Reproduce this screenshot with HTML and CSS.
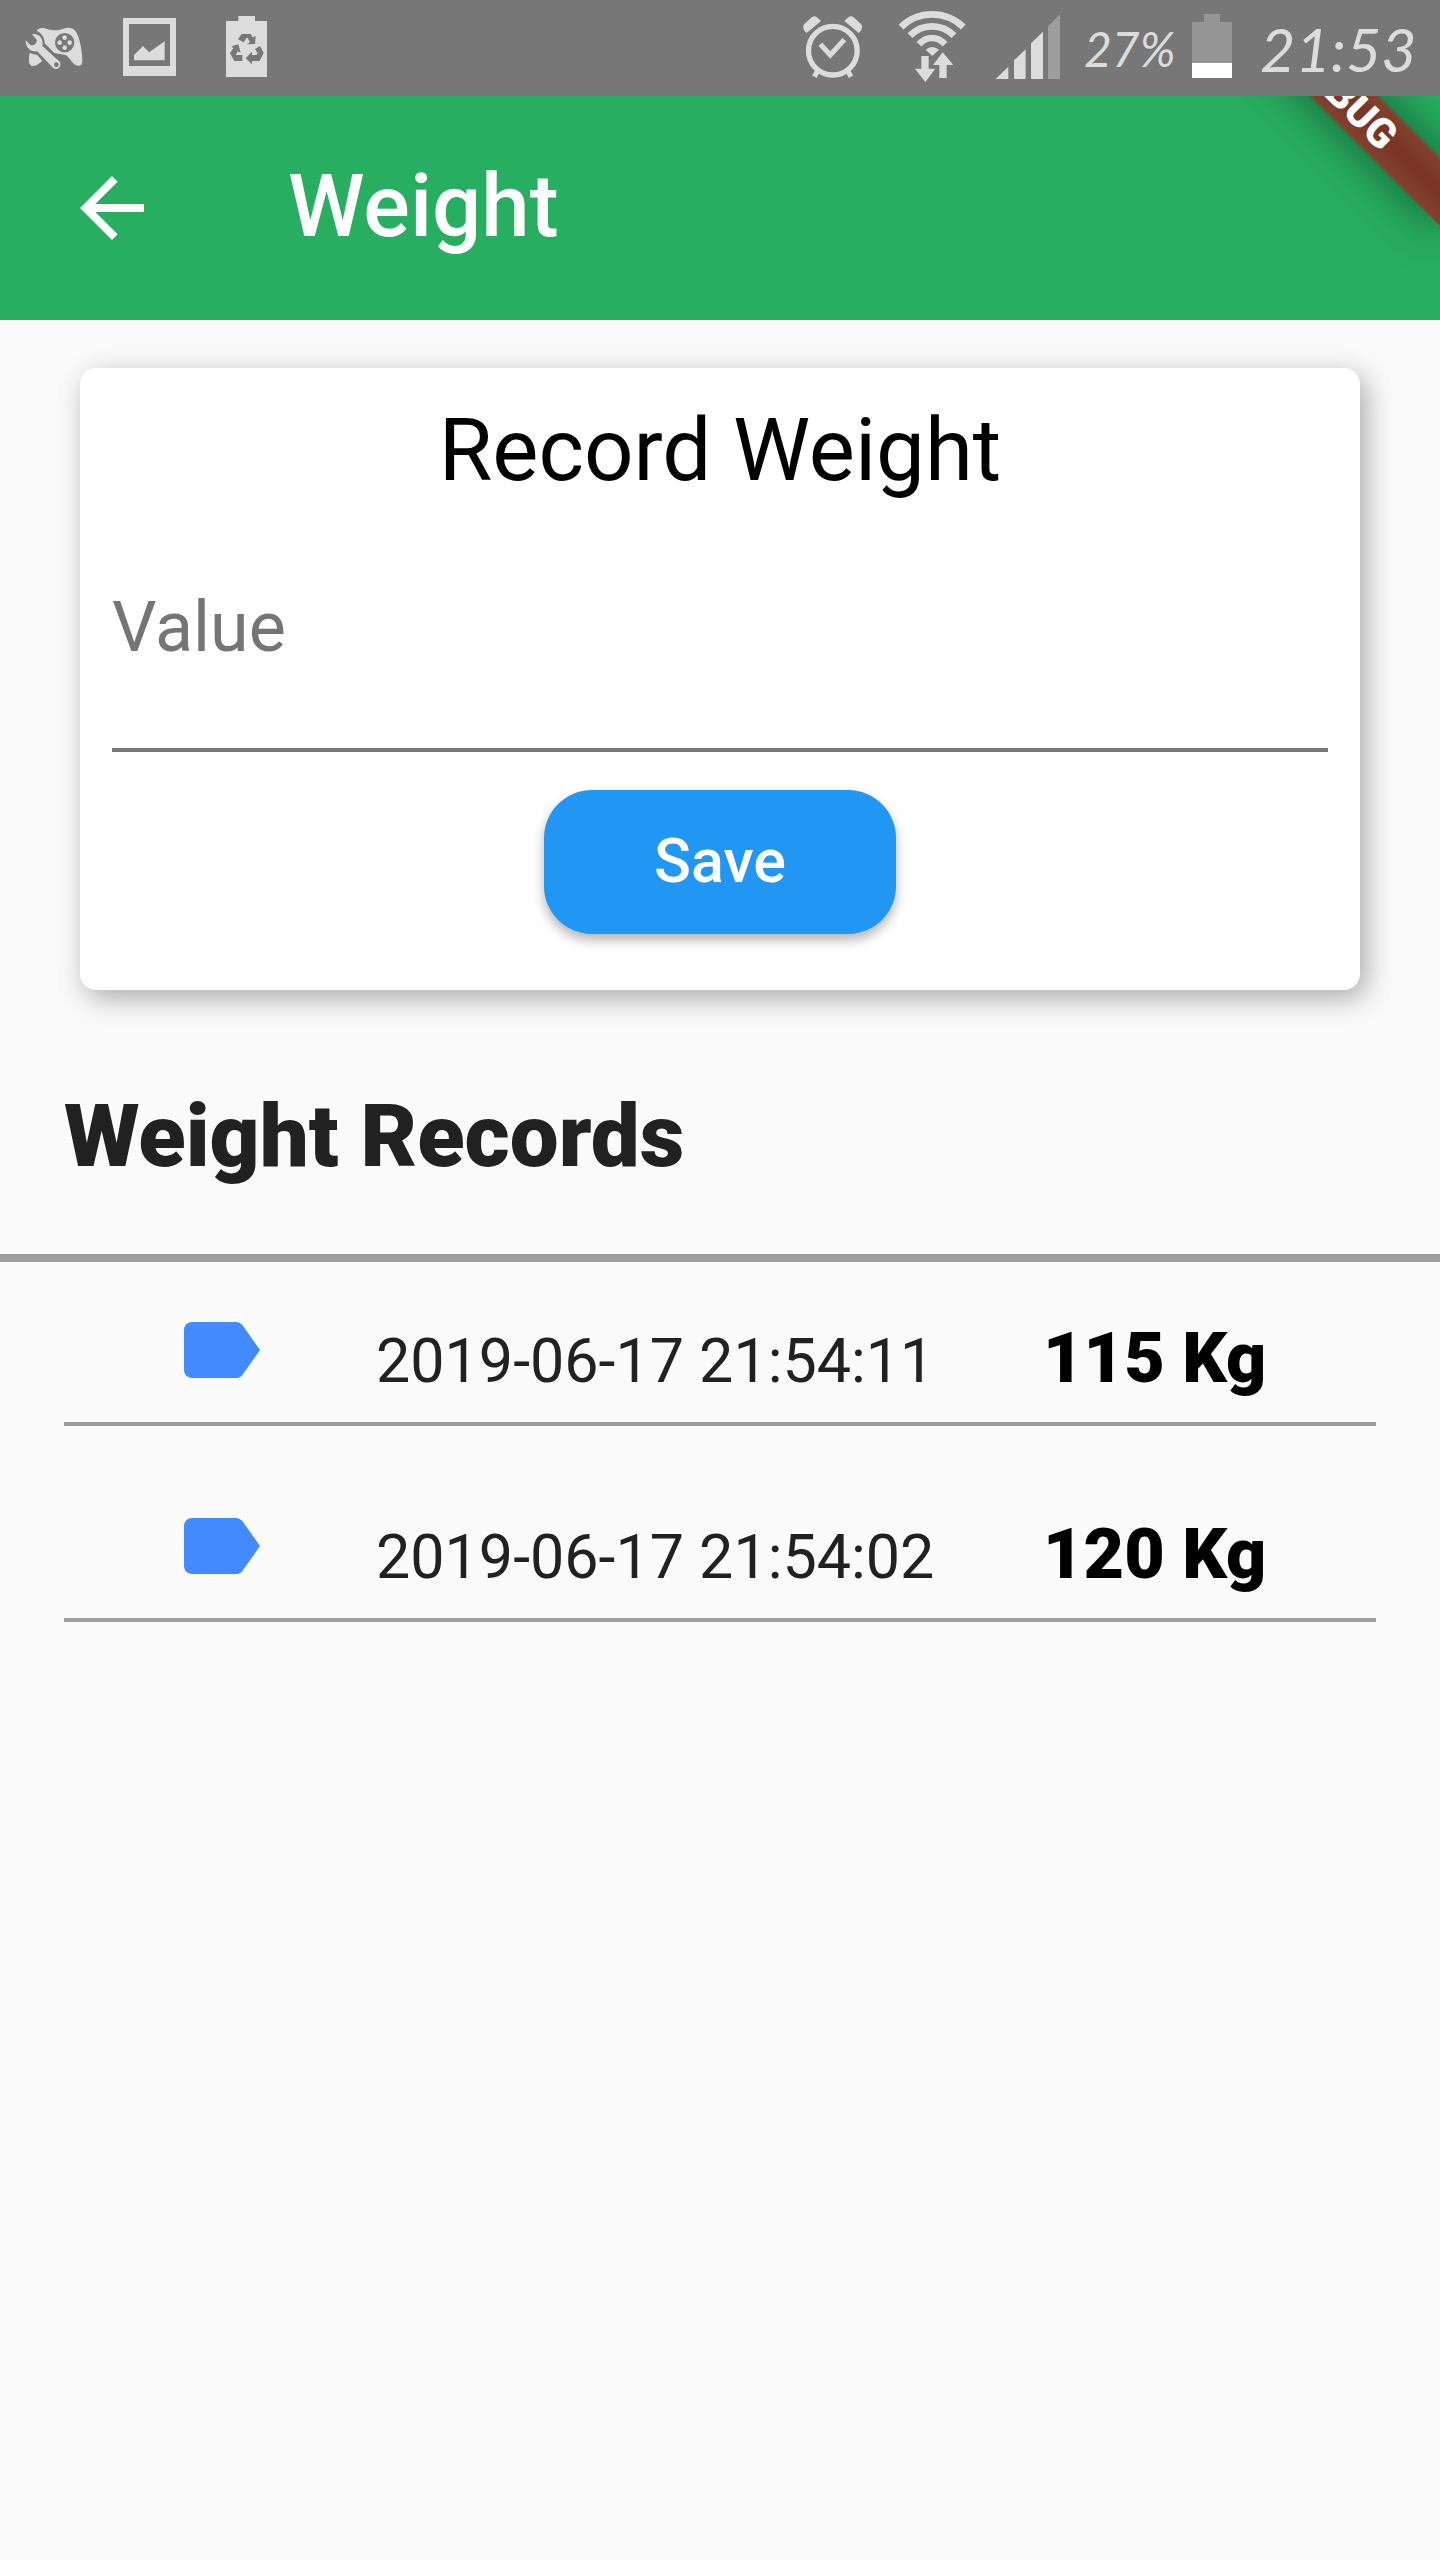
FILE: index.html
```html
<!DOCTYPE html>
<html lang="en">
<head>
<meta charset="utf-8">
<meta name="viewport" content="width=device-width, initial-scale=1">
<title>Weight</title>
<link rel="stylesheet" href="styles.css">
</head>
<body>
<div class="status">
  <div class="status-group">
    <svg class="status-icon" viewBox="0 0 300 288" aria-hidden="true">
      <path fill="#dcdcdc" d="M110 92C116 84 124 82 134 85C150 92 172 93 190 86C208 80 222 84 230 98C240 120 246 150 247 182C247 196 238 200 228 196C216 190 208 172 198 166C186 161 172 162 162 158L134 130C135 114 124 98 110 92Z"/>
      <path fill="#dcdcdc" d="M89 158C98 163 106 162 112 165L127 183C118 189 112 198 98 198C84 197 86 174 89 158Z"/>
      <circle cx="194" cy="128" r="29" fill="#777"/>
      <g fill="#dcdcdc"><circle cx="194" cy="113" r="7"/><circle cx="194" cy="143" r="7"/><circle cx="179" cy="128" r="7"/><circle cx="209" cy="128" r="7"/></g>
      <path fill="#dcdcdc" fill-rule="evenodd" d="M96 103C112 99 128 111 128 130L127 138L179 185C187 200 171 213 159 203L112 154C94 158 76 143 77 121L91 135C100 139 112 130 110 119ZM169 187A7 7 0 1 0 169 201A7 7 0 1 0 169 187Z"/>
    </svg>
    <svg class="status-icon" viewBox="300 0 300 288" aria-hidden="true">
      <path fill="#dcdcdc" fill-rule="evenodd" d="M369 54H528V228H369ZM387 72V198H510V72ZM402 181V165L429 138L447 157L494 124V181Z"/>
    </svg>
    <svg class="status-icon" viewBox="600 0 300 288" aria-hidden="true">
      <path fill="#dcdcdc" d="M678 63H715V48H765V63H801V231H678Z"/>
      <g fill="#777"><path d="M725 102H752L758 112L767 108L765 132L741 133L750 126L741 112L731 127L714 118Z"/><path d="M765 147L780 138L791 158L779 183H756V193L737 175L756 155V165H769L773 160Z"/><path d="M694 139L715 133L722 158L713 154L707 165H727V183H703L690 160L700 144Z"/></g>
    </svg>
  </div>
  <div class="status-group">
    <svg class="status-icon" viewBox="0 0 300 288" aria-hidden="true">
      <g fill="none" stroke="#dcdcdc"><circle cx="158.500" cy="152" r="73" stroke-width="16"/><path stroke-width="15" d="M121 133L151 165L193 119M113 212L103 230M203 212L213 230"/></g>
      <path fill="#dcdcdc" d="M80 99C70 92 67 80 73 72L96 51C103 46 111 49 123 63ZM236 99C246 92 249 80 243 72L220 51C213 46 205 49 193 63Z"/>
    </svg>
    <svg class="status-icon" viewBox="300 0 300 288" aria-hidden="true">
      <g fill="none" stroke="#dcdcdc" stroke-width="20"><path d="M363 81Q402 43 456 43T550 81"/><path d="M390 107Q417 79 456 79T522 107"/><path d="M417 133Q434 114 456 114T495 133"/></g>
      <path fill="#dcdcdc" d="M437 149Q456 133 477 149L457 168ZM424 168H446V206H466L436 246L405 206H424ZM488 157L520 195H500V234H478V195H459Z"/>
    </svg>
    <svg class="status-icon" viewBox="600 0 300 288" aria-hidden="true">
      <path fill="#dcdcdc" d="M647 237L685 200V237ZM702 237V181L737 148V237ZM753 237V130L789 95V237Z"/><path fill="#9e9e9e" d="M804 237V79L840 43V237Z"/>
    </svg>
    <span class="percent">27%</span>
    <svg class="battery" viewBox="0 0 40 64" aria-hidden="true"><path fill="#959595" d="M12 0H28V8H40V49H0V8H12Z"/><path fill="#fff" d="M0 49H40V64H0Z"/></svg>
    <time class="clock">21:53</time>
  </div>
</div>

<header class="appbar">
  <button class="back" type="button" aria-label="Back">
    <svg viewBox="0 0 24 24" aria-hidden="true"><path fill="#fff" d="M20 11H7.830l5.590-5.590L12 4l-8 8 8 8 1.410-1.410L7.830 13H20z"/></svg>
  </button>
  <h1 class="title">Weight</h1>
  <span class="debug">DEBUG</span>
</header>

<main>
  <form class="card">
    <h2 class="card-title">Record Weight</h2>
    <div class="field">
      <label for="value">Value</label>
      <input id="value" type="text" inputmode="decimal">
    </div>
    <button class="save" type="button">Save</button>
  </form>

  <h2 class="records-title">Weight Records</h2>
  <ul class="records">
    <li class="record">
      <svg class="tag" viewBox="0 0 24 24" aria-hidden="true"><path fill="#448aff" d="M17.630 5.840C17.270 5.330 16.670 5 16 5L5 5.010C3.900 5.010 3 5.900 3 7v10c0 1.100.9 1.990 2 1.990L16 19c.67 0 1.270-.33 1.630-.84L22 12z"/></svg>
      <time class="date">2019-06-17 21:54:11</time>
      <strong class="amount">115 Kg</strong>
    </li>
    <li class="record">
      <svg class="tag" viewBox="0 0 24 24" aria-hidden="true"><path fill="#448aff" d="M17.630 5.840C17.270 5.330 16.670 5 16 5L5 5.010C3.900 5.010 3 5.900 3 7v10c0 1.100.9 1.990 2 1.990L16 19c.67 0 1.270-.33 1.630-.84L22 12z"/></svg>
      <time class="date">2019-06-17 21:54:02</time>
      <strong class="amount">120 Kg</strong>
    </li>
  </ul>
</main>
</body>
</html>
```
FILE: styles.css
```css
* {
  box-sizing: border-box;
}

body {
  margin: 0;
  min-height: 100vh;
  background: #fafafa;
  color: #212121;
  font-family: Roboto, sans-serif;
}

h1,
h2,
ul {
  margin: 0;
  padding: 0;
}

svg {
  display: block;
  flex: none;
}

.status {
  display: flex;
  justify-content: space-between;
  height: 96px;
  background: #777;
  color: #dcdcdc;
  font-family: Lato, sans-serif;
  font-style: italic;
}

.status-group {
  display: flex;
  align-items: center;
}

.status-icon {
  width: 100px;
  height: 96px;
}

.percent {
  width: 112px;
  padding-left: 4px;
  font-size: 48px;
}

.battery {
  width: 40px;
  height: 64px;
  margin-bottom: 4px;
}

.clock {
  width: 208px;
  padding-left: 28px;
  font-size: 61px;
}

.appbar {
  position: relative;
  display: flex;
  align-items: center;
  gap: 128px;
  height: 224px;
  padding: 0 64px;
  overflow: hidden;
  background: #27ae60;
  color: #fff;
}

.back {
  width: 96px;
  height: 96px;
  padding: 0;
  border: 0;
  background: none;
}

.title {
  padding-bottom: 4px;
  font-size: 87px;
  font-weight: 500;
  line-height: 104px;
}

.debug {
  position: absolute;
  top: -24px;
  right: -64px;
  width: 320px;
  height: 48px;
  background: linear-gradient(#84432e, #7a3526 40%, #7a3526 60%, #84432e);
  box-shadow: 0 0 48px rgba(0, 0, 0, 0.5);
  font-size: 41px;
  font-weight: 900;
  line-height: 48px;
  text-align: center;
  transform: rotate(45deg);
}

.card {
  display: flex;
  flex-direction: column;
  align-items: center;
  margin: 48px 80px 94px;
  padding: 30px 32px 56px;
  border-radius: 16px;
  background: #fff;
  box-shadow: 6px 8px 28px rgba(0, 0, 0, 0.32);
}

.card-title {
  color: #000;
  font-size: 87px;
  font-weight: 400;
  line-height: 104px;
}

.field {
  display: flex;
  flex-direction: column;
  width: 100%;
  margin: 84px 0 38px;
  border-bottom: 4px solid #757575;
  color: #757575;
  font-size: 70px;
  line-height: 82px;
}

.field input {
  height: 80px;
  padding: 0;
  border: 0;
  outline: 0;
  background: none;
  font: inherit;
}

.save {
  width: 352px;
  height: 144px;
  padding: 0 0 2px;
  border: 0;
  border-radius: 48px;
  background: #2196f3;
  box-shadow: 0 6px 12px rgba(0, 0, 0, 0.3);
  color: #fff;
  font-family: inherit;
  font-size: 61px;
  font-weight: 500;
}

.records-title {
  padding: 0 64px 66px;
  border-bottom: 8px solid #9e9e9e;
  font-size: 87px;
  font-weight: 900;
  line-height: 104px;
}

.records {
  display: grid;
  gap: 32px;
  padding: 0 64px;
  list-style: none;
}

.record {
  display: grid;
  grid-template-columns: 312fr 667fr 333fr;
  align-items: end;
  padding: 40px 0 24px;
  border-bottom: 4px solid #9e9e9e;
}

.tag {
  width: 96px;
  height: 96px;
  justify-self: center;
}

.date {
  font-size: 61px;
  line-height: 74px;
}

.amount {
  color: #000;
  font-size: 70px;
  font-weight: 900;
  line-height: 80px;
}
```
